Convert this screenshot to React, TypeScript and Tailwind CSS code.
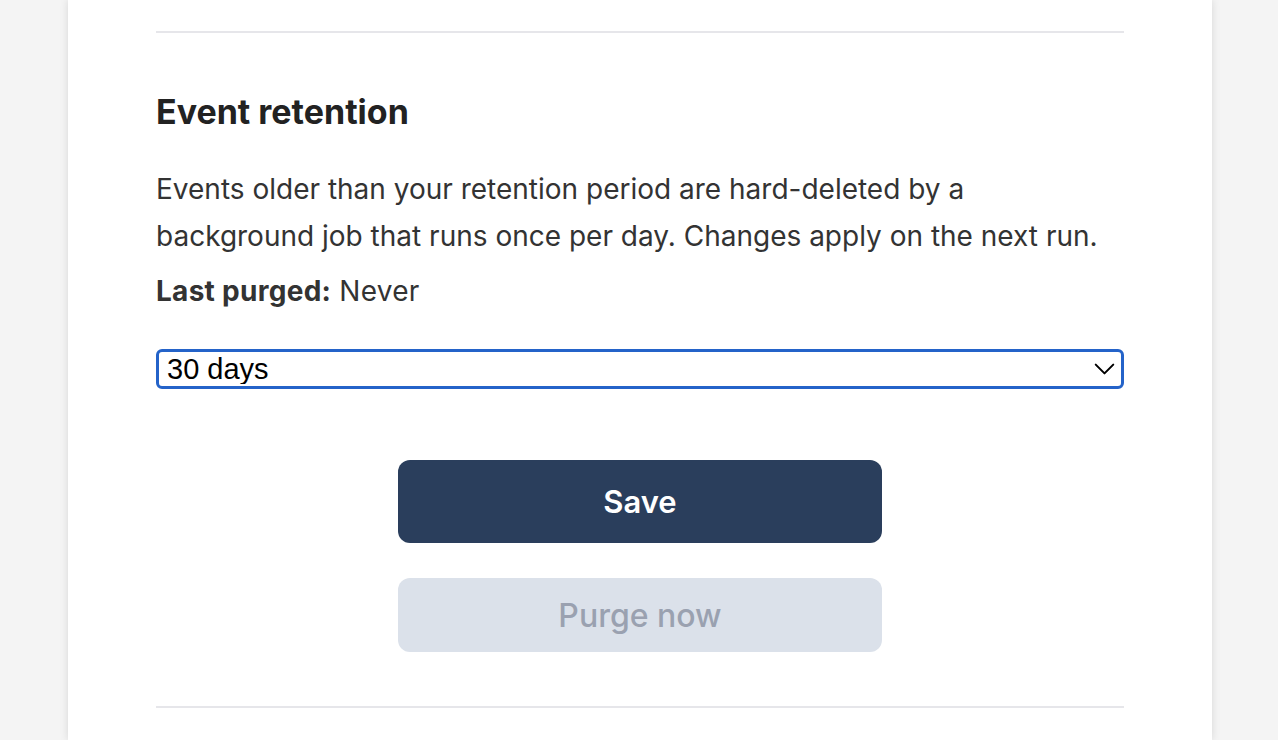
import { ChevronDown } from "lucide-react";

export default function App() {
  return (
    <div className="min-h-screen bg-[#f4f4f4] font-['Inter',sans-serif]">
      <div className="ml-[68px] w-[1144px] min-h-[740px] bg-white shadow-[0_0_8px_rgba(0,0,0,0.12)] px-[88px] pt-[31px]">
        <div className="border-t-2 border-[#e6e6ea]" />

        <section className="pt-[58px]">
          <h2 className="text-[34px] leading-[42px] font-bold text-[#222]">Event retention</h2>
          <p className="mt-[33px] text-[28px] leading-[47px] text-[#333]">
            Events older than your retention period are hard-deleted by a background job that runs once per day.
            Changes apply on the next run.
          </p>
          <p className="mt-[8px] text-[28px] leading-[47px] text-[#333] tracking-[0.01em]">
            <span className="font-bold">Last purged:</span> Never
          </p>

          <div className="relative mt-[34px]">
            <select
              defaultValue="30"
              className="w-full h-[40px] appearance-none rounded-[6px] border-[3px] border-[#2463c9] bg-white pl-[8px] text-[29px] leading-none text-black font-['Liberation_Sans',Arial,sans-serif] outline-none"
            >
              <option value="7">7 days</option>
              <option value="30">30 days</option>
              <option value="90">90 days</option>
            </select>
            <ChevronDown className="pointer-events-none absolute right-[2px] top-1/2 -translate-y-1/2 w-[35px] h-[35px] text-black" strokeWidth={1.4} />
          </div>

          <div className="flex flex-col items-center mt-[71px]">
            <button className="w-[484px] h-[83px] rounded-[12px] bg-[#2a3e5c] text-white text-[31px] font-semibold pt-[2px]">
              Save
            </button>
            <button disabled className="mt-[35px] w-[484px] h-[74px] rounded-[12px] bg-[#dbe1ea] text-[#9aa1b0] text-[32px] font-medium pt-[2px]">
              Purge now
            </button>
          </div>
        </section>

        <div className="mt-[54px] border-t-2 border-[#e6e6ea]" />
      </div>
    </div>
  );
}
